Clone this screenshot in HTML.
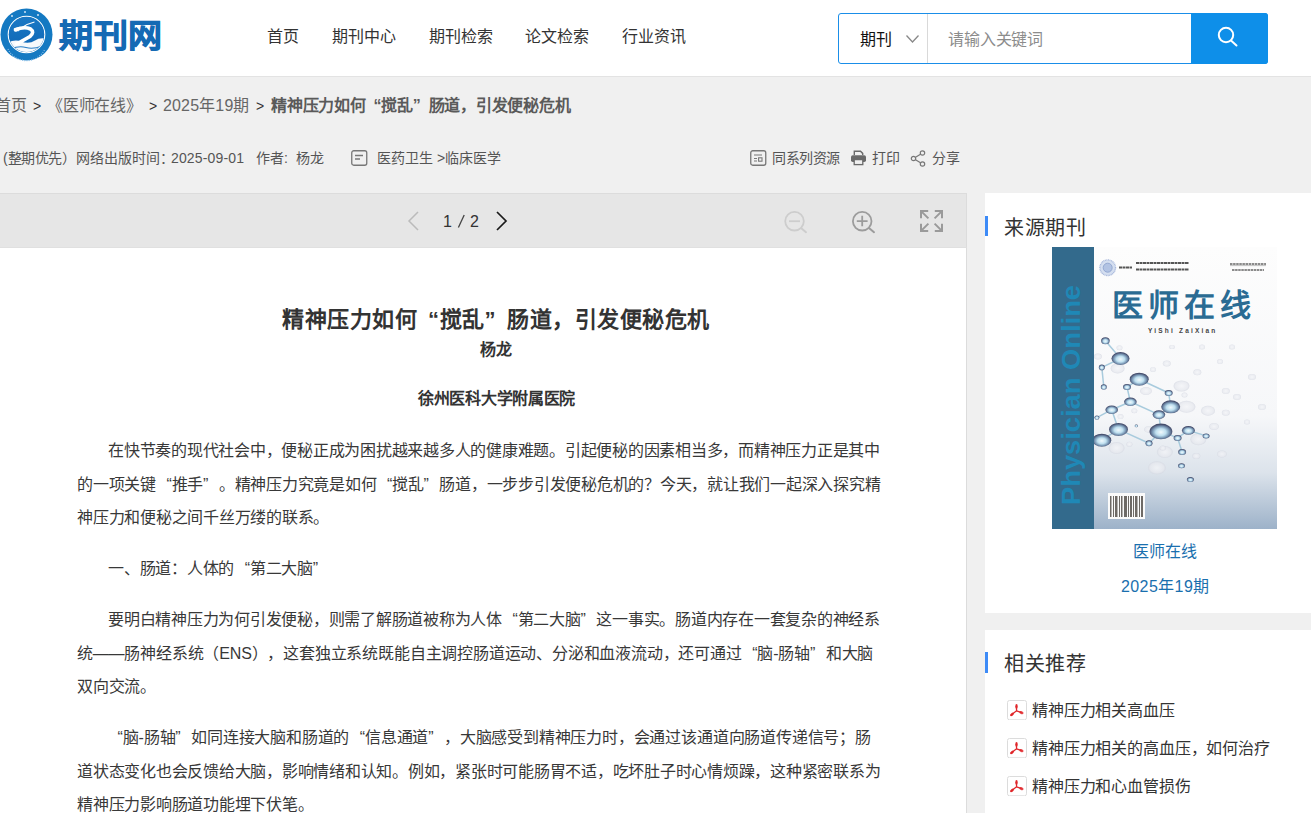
<!DOCTYPE html>
<html lang="zh-CN"><head><meta charset="utf-8">
<style>
*{margin:0;padding:0;box-sizing:border-box}
html,body{text-spacing-trim:space-all;width:1311px;height:813px;overflow:hidden;background:#f0f0f0;font-family:"Liberation Sans",sans-serif;color:#333}
.a{position:absolute;white-space:nowrap}
#hdr{position:absolute;left:0;top:0;width:1311px;height:77px;background:#fff;border-bottom:1px solid #e3e3e3}
.nav{font-size:16px;color:#333;line-height:20px;top:27px}
#search{position:absolute;left:838px;top:13px;width:430px;height:51px;border:1px solid #1a8ee8;border-radius:3px;background:#fff}
#sbtn{position:absolute;left:1191px;top:13px;width:77px;height:51px;background:#0e8fe9;border-radius:0 3px 3px 0}
#toolbar{position:absolute;left:0;top:193px;width:967px;height:55px;background:#e6e6e6;border-top:1px solid #dcdcdc;border-bottom:1px solid #e0e0e0;border-right:1px solid #dcdcdc}
#doc{position:absolute;left:0;top:248px;width:967px;height:600px;background:#fff;border-right:1px solid #dcdcdc}
.card{position:absolute;left:985px;width:340px;background:#fff}
.bar{position:absolute;left:0;width:3px;background:#3d8bf7}
.bc{font-size:16px;line-height:20px;color:#666;top:96px;letter-spacing:-0.25px}
.bcg{font-size:14px;line-height:20px;color:#333;top:96px}
.meta{font-size:14px;line-height:18px;color:#555;top:149px}
.pg{font-size:16px;line-height:20px;color:#333;top:212px}
.li{left:1032px;font-size:16px;line-height:20px;color:#333;letter-spacing:-0.15px}
.p{font-size:16px;letter-spacing:-0.25px;color:#383838;line-height:20px}
.lq{display:inline-block;width:15.75px;text-align:right}
.rq{display:inline-block;width:15.75px;text-align:left}
</style></head>
<body>
<div id="hdr"></div>
<!-- logo -->
<svg class="a" style="left:0;top:5px" width="56" height="60" viewBox="0 0 56 60">
  <defs><clipPath id="ic"><circle cx="26.5" cy="29.5" r="17.6"/></clipPath>
  <linearGradient id="ib" x1="0" y1="0" x2="0" y2="1"><stop offset="0" stop-color="#1f7fcb"/><stop offset="1" stop-color="#0a5fae"/></linearGradient></defs>
  <circle cx="26.5" cy="29.5" r="26" fill="#1479c2"/>
  <circle cx="26.5" cy="29.5" r="18.3" fill="none" stroke="#fff" stroke-width="1.1"/>
  <g clip-path="url(#ic)">
    <rect x="0" y="0" width="56" height="60" fill="url(#ib)"/>
    <path d="M6 38.5 Q14 34 21 36.5 Q29 39.5 35 35.5 Q39 32.5 46 33.5 L46 52 L6 52Z" fill="#f6f9fc"/>
    <path d="M11 44 Q19 40.5 26 42.5 Q33 44.5 42 41" fill="none" stroke="#2a7fc6" stroke-width="1.1"/>
    <path d="M15.5 25 Q24 21 30.5 24 Q35 27 30 31.5 Q23 35.5 16.5 39" fill="none" stroke="#fff" stroke-width="3.6" stroke-linecap="round"/>
    <path d="M13.5 23.2 L19 22 L18.5 26.5 Z" fill="#fff"/>
    <path d="M22 22.5 Q28 18.5 34.5 17" fill="none" stroke="#fff" stroke-width="1.1"/>
  </g>
  <path d="M8 44 A20.5 20.5 0 0 0 45 44" fill="none" stroke="#8fc2ea" stroke-width="1.2" stroke-dasharray="1 1.3"/>
  <g fill="#cfe4f5"><circle cx="12" cy="11" r="1"/><circle cx="25" cy="7" r="1"/><circle cx="38" cy="10" r="1"/></g>
</svg>
<div class="a" style="left:59px;top:16px;font-size:34px;font-weight:bold;color:#156ab4;line-height:40px;letter-spacing:0.5px;-webkit-text-stroke:0.9px #156ab4;transform:scaleY(0.92);transform-origin:0 50%">期刊网</div>

<div class="a nav" style="left:267px">首页</div>
<div class="a nav" style="left:332px">期刊中心</div>
<div class="a nav" style="left:429px">期刊检索</div>
<div class="a nav" style="left:525px">论文检索</div>
<div class="a nav" style="left:622px">行业资讯</div>

<div id="search"></div>
<div style="position:absolute;left:927px;top:14px;width:1px;height:49px;background:#d9d9d9"></div>
<div class="a" style="left:860px;top:30px;font-size:16px;color:#111;line-height:20px">期刊</div>
<svg class="a" style="left:905px;top:34px" width="16" height="10" viewBox="0 0 16 10"><path d="M1.5 1.5 L7.5 8 L13.5 1.5" fill="none" stroke="#888" stroke-width="1.3"/></svg>
<div class="a" style="left:948px;top:30px;font-size:16px;color:#8c8c8c;line-height:20px;letter-spacing:-0.15px">请输入关键词</div>
<div id="sbtn"></div>
<svg class="a" style="left:1214px;top:24px" width="26" height="26" viewBox="0 0 26 26"><circle cx="12" cy="11" r="7.2" fill="none" stroke="#fff" stroke-width="2"/><path d="M17 16.5 L22.5 21.5" stroke="#fff" stroke-width="2" stroke-linecap="round"/></svg>

<!-- breadcrumb -->
<div class="a bc" style="left:-5px">首页</div>
<div class="a bcg" style="left:33px">&gt;</div>
<div class="a bc" style="left:47px">《医师在线》</div>
<div class="a bcg" style="left:149px">&gt;</div>
<div class="a bc" style="left:163px;letter-spacing:0.15px">2025年19期</div>
<div class="a bcg" style="left:256px">&gt;</div>
<div class="a bc" style="left:271px;font-weight:bold;color:#5a5a5a">精神压力如何<span class="lq">“</span>搅乱<span class="rq">”</span>肠道，引发便秘危机</div>

<!-- meta -->
<div class="a meta" style="left:3px">(<span style="letter-spacing:-0.4px">整期优先）</span>网络出版时间：</div><div class="a meta" style="left:171px;letter-spacing:0.15px">2025-09-01</div>
<div class="a meta" style="left:256px">作者:&nbsp;&nbsp;杨龙</div>
<svg class="a" style="left:351px;top:150px" width="17" height="16" viewBox="0 0 17 16"><rect x="0.75" y="0.75" width="15" height="14.5" rx="2" fill="none" stroke="#777" stroke-width="1.3"/><path d="M4 5.5 H12 M4 9 H9" stroke="#777" stroke-width="1.3"/></svg>
<div class="a" style="left:377px;top:149px;font-size:14px;line-height:18px;color:#555">医药卫生 &gt;临床医学</div>

<svg class="a" style="left:750px;top:150px" width="17" height="16" viewBox="0 0 17 16"><rect x="0.75" y="0.75" width="15" height="14.5" rx="2" fill="none" stroke="#777" stroke-width="1.3"/><path d="M4 5 H12 M4 8.5 H7 M4 11 H7" stroke="#777" stroke-width="1.2"/><rect x="8.6" y="7.8" width="3.4" height="3.4" fill="none" stroke="#777" stroke-width="1.1"/></svg>
<div class="a" style="left:772px;top:149px;font-size:14px;line-height:18px;color:#555;letter-spacing:-0.5px">同系列资源</div>
<svg class="a" style="left:850px;top:150px" width="17" height="16" viewBox="0 0 17 16"><path d="M4.3 5 V1.2 H10.5 L12.7 3.4 V5" fill="none" stroke="#6a6a6a" stroke-width="1.4"/><rect x="1" y="5.2" width="15" height="6.8" rx="1.8" fill="#6a6a6a"/><rect x="4.2" y="9.6" width="8.6" height="5" fill="#f0f0f0" stroke="#6a6a6a" stroke-width="1.3"/></svg>
<div class="a" style="left:872px;top:149px;font-size:14px;line-height:18px;color:#555">打印</div>
<svg class="a" style="left:910px;top:150px" width="17" height="17" viewBox="0 0 17 17"><circle cx="12.5" cy="3" r="2.2" fill="none" stroke="#777" stroke-width="1.2"/><circle cx="3.5" cy="8.5" r="2.2" fill="none" stroke="#777" stroke-width="1.2"/><circle cx="12.5" cy="14" r="2.2" fill="none" stroke="#777" stroke-width="1.2"/><path d="M5.5 7.3 L10.5 4.2 M5.5 9.7 L10.5 12.8" stroke="#777" stroke-width="1.2"/></svg>
<div class="a" style="left:932px;top:149px;font-size:14px;line-height:18px;color:#555">分享</div>

<!-- toolbar -->
<div id="toolbar"></div>
<svg class="a" style="left:405px;top:210px" width="16" height="22" viewBox="0 0 16 22"><path d="M13 2 L4 11 L13 20" fill="none" stroke="#bbb" stroke-width="1.5"/></svg>
<div class="a pg" style="left:443px">1</div><svg class="a" style="left:456px;top:213px" width="10" height="16" viewBox="0 0 10 16"><path d="M2.4 14.6 L8.2 2" stroke="#444" stroke-width="1.3"/></svg><div class="a pg" style="left:470px">2</div>
<svg class="a" style="left:493px;top:210px" width="16" height="22" viewBox="0 0 16 22"><path d="M4 2 L13 11 L4 20" fill="none" stroke="#1a1a1a" stroke-width="1.7"/></svg>
<svg class="a" style="left:782px;top:209px" width="26" height="26" viewBox="0 0 26 26"><circle cx="12.5" cy="12.2" r="9.3" fill="none" stroke="#cdcdcd" stroke-width="1.8"/><path d="M7 12.2 H18" stroke="#cdcdcd" stroke-width="1.8"/><path d="M19.3 19.3 L24 23.2" stroke="#cdcdcd" stroke-width="2" stroke-linecap="round"/></svg>
<svg class="a" style="left:850px;top:209px" width="26" height="26" viewBox="0 0 26 26"><circle cx="12.2" cy="12.2" r="9.3" fill="none" stroke="#9c9c9c" stroke-width="1.8"/><path d="M6.8 12.2 H17.6 M12.2 6.8 V17.2" stroke="#9c9c9c" stroke-width="1.8"/><path d="M19.3 19.3 L24 23.2" stroke="#9c9c9c" stroke-width="2" stroke-linecap="round"/></svg>
<svg class="a" style="left:919px;top:209px" width="25" height="24" viewBox="0 0 25 24"><g stroke="#9a9a9a" stroke-width="2" fill="none"><path d="M2 9.2 V2 H9.2 M2.6 2.6 L9.4 9.4"/><path d="M23 9.2 V2 H15.8 M22.4 2.6 L15.6 9.4"/><path d="M2 14.8 V22 H9.2 M2.6 21.4 L9.4 14.6"/><path d="M23 14.8 V22 H15.8 M22.4 21.4 L15.6 14.6"/></g></svg>

<!-- document -->
<div id="doc"></div>
<div class="a" style="left:282px;top:307px;font-size:22px;line-height:26px;font-weight:bold;color:#333;letter-spacing:0.5px">精神压力如何<span class="lq" style="width:22.5px">“</span>搅乱<span class="rq" style="width:22.5px">”</span>肠道，引发便秘危机</div>
<div class="a" style="left:480px;top:340px;font-size:16px;line-height:20px;font-weight:bold;color:#333">杨龙</div>
<div class="a" style="left:418px;top:389px;font-size:16px;line-height:20px;font-weight:bold;color:#333;letter-spacing:-0.3px">徐州医科大学附属医院</div>

<div class="a p" style="left:108px;top:441px">在快节奏的现代社会中，便秘正成为困扰越来越多人的健康难题。引起便秘的因素相当多，而精神压力正是其中</div>
<div class="a p" style="left:77px;top:475px">的一项关键<span class="lq">“</span>推手<span class="rq">”</span>。精神压力究竟是如何<span class="lq">“</span>搅乱<span class="rq">”</span>肠道，一步步引发便秘危机的？今天，就让我们一起深入探究精</div>
<div class="a p" style="left:77px;top:508px">神压力和便秘之间千丝万缕的联系。</div>
<div class="a p" style="left:108px;top:559px">一、肠道：人体的<span class="lq">“</span>第二大脑<span class="rq">”</span></div>
<div class="a p" style="left:108px;top:610px">要明白精神压力为何引发便秘，则需了解肠道被称为人体<span class="lq">“</span>第二大脑<span class="rq">”</span>这一事实。肠道内存在一套复杂的神经系</div>
<div class="a p" style="left:77px;top:644px;letter-spacing:-0.19px">统——肠神经系统（ENS），这套独立系统既能自主调控肠道运动、分泌和血液流动，还可通过<span class="lq">“</span>脑-肠轴<span class="rq">”</span>和大脑</div>
<div class="a p" style="left:77px;top:677px">双向交流。</div>
<div class="a p" style="left:107px;top:728px;letter-spacing:-0.19px"><span class="lq">“</span>脑-肠轴<span class="rq">”</span>如同连接大脑和肠道的<span class="lq">“</span>信息通道<span class="rq">”</span>，大脑感受到精神压力时，会通过该通道向肠道传递信号；肠</div>
<div class="a p" style="left:77px;top:762px">道状态变化也会反馈给大脑，影响情绪和认知。例如，紧张时可能肠胃不适，吃坏肚子时心情烦躁，这种紧密联系为</div>
<div class="a p" style="left:77px;top:795px">精神压力影响肠道功能埋下伏笔。</div>

<!-- sidebar card 1 -->
<div class="card" style="top:193px;height:420px">
  <div class="bar" style="top:23px;height:20px"></div>
</div>
<div class="a" style="left:1004px;top:216px;font-size:20px;line-height:24px;color:#333;letter-spacing:0.6px">来源期刊</div>
<svg class="a" style="left:1052px;top:247px" width="225" height="282" viewBox="0 0 225 282">
<defs><linearGradient id="cbg" x1="0" y1="0" x2="0" y2="1"><stop offset="0" stop-color="#fdfdfd"/><stop offset="0.6" stop-color="#f6f7f9"/><stop offset="0.8" stop-color="#dce3eb"/><stop offset="1" stop-color="#9db2c9"/></linearGradient>
<radialGradient id="bd" cx="50%" cy="55%" r="50%"><stop offset="0" stop-color="#f2f9fd"/><stop offset="0.45" stop-color="#bfe0f0"/><stop offset="0.75" stop-color="#7896b4"/><stop offset="1" stop-color="#454d6c"/></radialGradient>
<radialGradient id="bf" cx="50%" cy="50%" r="55%"><stop offset="0" stop-color="#f4f5f8"/><stop offset="0.7" stop-color="#e6e8ee"/><stop offset="1" stop-color="#cdd1dc"/></radialGradient></defs>
<rect width="225" height="282" fill="url(#cbg)"/>
<ellipse cx="65.6" cy="121.4" rx="7.0" ry="5.0" fill="url(#bf)" opacity=".75"/>
<ellipse cx="45.9" cy="109.6" rx="4.0" ry="3.0" fill="url(#bf)" opacity=".75"/>
<ellipse cx="67.5" cy="100.7" rx="3.0" ry="2.5" fill="url(#bf)" opacity=".75"/>
<ellipse cx="101.0" cy="122.4" rx="3.0" ry="2.5" fill="url(#bf)" opacity=".75"/>
<ellipse cx="114.8" cy="116.5" rx="4.0" ry="3.0" fill="url(#bf)" opacity=".75"/>
<ellipse cx="129.5" cy="139.0" rx="8.0" ry="5.5" fill="url(#bf)" opacity=".75"/>
<ellipse cx="145.3" cy="125.3" rx="4.0" ry="3.0" fill="url(#bf)" opacity=".75"/>
<ellipse cx="94.0" cy="144.0" rx="6.0" ry="4.0" fill="url(#bf)" opacity=".75"/>
<ellipse cx="134.5" cy="159.8" rx="9.0" ry="6.0" fill="url(#bf)" opacity=".75"/>
<ellipse cx="132.5" cy="148.0" rx="3.0" ry="2.5" fill="url(#bf)" opacity=".75"/>
<ellipse cx="156.0" cy="163.7" rx="7.0" ry="5.0" fill="url(#bf)" opacity=".75"/>
<ellipse cx="97.0" cy="182.4" rx="5.0" ry="3.5" fill="url(#bf)" opacity=".75"/>
<ellipse cx="64.6" cy="201.0" rx="8.0" ry="6.0" fill="url(#bf)" opacity=".75"/>
<ellipse cx="112.8" cy="205.0" rx="8.0" ry="6.0" fill="url(#bf)" opacity=".75"/>
<ellipse cx="146.3" cy="192.3" rx="8.0" ry="6.0" fill="url(#bf)" opacity=".75"/>
<ellipse cx="104.9" cy="220.8" rx="9.0" ry="6.5" fill="url(#bf)" opacity=".75"/>
<ellipse cx="162.0" cy="179.5" rx="5.0" ry="3.5" fill="url(#bf)" opacity=".75"/>
<ellipse cx="173.8" cy="165.7" rx="4.0" ry="3.0" fill="url(#bf)" opacity=".75"/>
<ellipse cx="169.9" cy="207.0" rx="5.0" ry="3.5" fill="url(#bf)" opacity=".75"/>
<ellipse cx="173.8" cy="144.0" rx="4.0" ry="3.0" fill="url(#bf)" opacity=".75"/>
<ellipse cx="168.0" cy="114.5" rx="3.0" ry="2.5" fill="url(#bf)" opacity=".75"/>
<ellipse cx="144.3" cy="209.0" rx="4.0" ry="3.0" fill="url(#bf)" opacity=".75"/>
<ellipse cx="77.4" cy="197.2" rx="3.0" ry="2.5" fill="url(#bf)" opacity=".75"/>
<ellipse cx="68.5" cy="169.6" rx="3.0" ry="2.5" fill="url(#bf)" opacity=".75"/>
<ellipse cx="82.3" cy="163.7" rx="3.0" ry="2.5" fill="url(#bf)" opacity=".75"/>
<ellipse cx="110.8" cy="201.0" rx="3.0" ry="2.5" fill="url(#bf)" opacity=".75"/>
<ellipse cx="185.0" cy="150.0" rx="4.0" ry="3.0" fill="url(#bf)" opacity=".75"/>
<ellipse cx="200.0" cy="130.0" rx="4.0" ry="3.0" fill="url(#bf)" opacity=".75"/>
<ellipse cx="195.0" cy="175.0" rx="3.0" ry="2.5" fill="url(#bf)" opacity=".75"/>
<ellipse cx="210.0" cy="160.0" rx="4.0" ry="3.0" fill="url(#bf)" opacity=".75"/>
<ellipse cx="150.0" cy="100.0" rx="3.0" ry="2.5" fill="url(#bf)" opacity=".75"/>
<ellipse cx="120.0" cy="100.0" rx="3.0" ry="2.0" fill="url(#bf)" opacity=".75"/>
<ellipse cx="180.0" cy="100.0" rx="3.0" ry="2.5" fill="url(#bf)" opacity=".75"/>
<line x1="53.4" y1="93.8" x2="68.5" y2="111.5" stroke="#a8cbdd" stroke-width="1.5"/>
<line x1="68.5" y1="111.5" x2="49.8" y2="120.4" stroke="#a8cbdd" stroke-width="1.5"/>
<line x1="49.8" y1="120.4" x2="51.8" y2="140.0" stroke="#a8cbdd" stroke-width="1.5"/>
<line x1="87.2" y1="132.2" x2="75.0" y2="140.0" stroke="#a8cbdd" stroke-width="1.5"/>
<line x1="87.2" y1="132.2" x2="116.7" y2="146.0" stroke="#a8cbdd" stroke-width="1.5"/>
<line x1="75.0" y1="140.0" x2="78.4" y2="154.8" stroke="#a8cbdd" stroke-width="1.5"/>
<line x1="78.4" y1="154.8" x2="59.7" y2="162.7" stroke="#a8cbdd" stroke-width="1.5"/>
<line x1="78.4" y1="154.8" x2="106.9" y2="167.6" stroke="#a8cbdd" stroke-width="1.5"/>
<line x1="59.7" y1="162.7" x2="66.5" y2="182.4" stroke="#a8cbdd" stroke-width="1.5"/>
<line x1="59.7" y1="162.7" x2="44.9" y2="170.6" stroke="#a8cbdd" stroke-width="1.5"/>
<line x1="116.7" y1="146.0" x2="118.7" y2="159.8" stroke="#a8cbdd" stroke-width="1.5"/>
<line x1="118.7" y1="159.8" x2="106.9" y2="167.6" stroke="#a8cbdd" stroke-width="1.5"/>
<line x1="106.9" y1="167.6" x2="108.9" y2="184.4" stroke="#a8cbdd" stroke-width="1.5"/>
<line x1="66.5" y1="182.4" x2="97.0" y2="196.2" stroke="#a8cbdd" stroke-width="1.5"/>
<line x1="97.0" y1="196.2" x2="108.9" y2="184.4" stroke="#a8cbdd" stroke-width="1.5"/>
<line x1="66.5" y1="182.4" x2="49.8" y2="193.2" stroke="#a8cbdd" stroke-width="1.5"/>
<line x1="108.9" y1="184.4" x2="125.6" y2="190.9" stroke="#a8cbdd" stroke-width="1.5"/>
<line x1="125.6" y1="190.9" x2="136.4" y2="183.4" stroke="#a8cbdd" stroke-width="1.5"/>
<line x1="136.4" y1="183.4" x2="154.1" y2="188.9" stroke="#a8cbdd" stroke-width="1.5"/>
<line x1="125.6" y1="190.9" x2="130.1" y2="205.0" stroke="#a8cbdd" stroke-width="1.5"/>
<ellipse cx="53.4" cy="93.8" rx="4.3" ry="3.5" fill="url(#bd)"/>
<ellipse cx="68.5" cy="111.5" rx="9.0" ry="6.5" fill="url(#bd)"/>
<ellipse cx="49.8" cy="120.4" rx="3.0" ry="2.8" fill="url(#bd)"/>
<ellipse cx="51.8" cy="140.0" rx="3.0" ry="2.8" fill="url(#bd)"/>
<ellipse cx="87.2" cy="132.2" rx="9.5" ry="6.5" fill="url(#bd)"/>
<ellipse cx="75.0" cy="140.0" rx="4.0" ry="3.0" fill="url(#bd)"/>
<ellipse cx="78.4" cy="154.8" rx="6.3" ry="4.3" fill="url(#bd)"/>
<ellipse cx="116.7" cy="146.0" rx="4.0" ry="3.0" fill="url(#bd)"/>
<ellipse cx="118.7" cy="159.8" rx="9.5" ry="6.5" fill="url(#bd)"/>
<ellipse cx="59.7" cy="162.7" rx="6.3" ry="4.3" fill="url(#bd)"/>
<ellipse cx="106.9" cy="167.6" rx="6.3" ry="4.3" fill="url(#bd)"/>
<ellipse cx="66.5" cy="182.4" rx="9.5" ry="6.5" fill="url(#bd)"/>
<ellipse cx="108.9" cy="184.4" rx="11.4" ry="7.8" fill="url(#bd)"/>
<ellipse cx="136.4" cy="183.4" rx="6.5" ry="4.3" fill="url(#bd)"/>
<ellipse cx="49.8" cy="193.2" rx="9.5" ry="6.5" fill="url(#bd)"/>
<ellipse cx="97.0" cy="196.2" rx="3.5" ry="3.0" fill="url(#bd)"/>
<ellipse cx="125.6" cy="190.9" rx="4.0" ry="3.0" fill="url(#bd)"/>
<ellipse cx="154.1" cy="188.9" rx="3.5" ry="2.5" fill="url(#bd)"/>
<ellipse cx="130.1" cy="205.0" rx="4.0" ry="3.0" fill="url(#bd)"/>
<ellipse cx="129.5" cy="218.8" rx="3.5" ry="2.5" fill="url(#bd)"/>
<ellipse cx="138.4" cy="232.6" rx="3.5" ry="2.5" fill="url(#bd)"/>
<ellipse cx="44.9" cy="170.6" rx="2.5" ry="2.2" fill="url(#bd)"/>
<ellipse cx="84.3" cy="178.9" rx="1.6" ry="1.4" fill="url(#bd)"/>
<rect x="0" y="0" width="42" height="282" fill="#336a8c"/>
<text transform="translate(28 258) rotate(-90)" font-family="Liberation Sans" font-weight="bold" font-size="26" fill="#1f88b6" textLength="220" lengthAdjust="spacingAndGlyphs">Physician Online</text>
<circle cx="55.7" cy="20.7" r="7.8" fill="#d5dff0" stroke="#a9b9dc" stroke-width="1.4" stroke-dasharray="1 .6"/><circle cx="55.7" cy="20.7" r="4.5" fill="#b2c3e3" stroke="#8aa0cc" stroke-width=".8"/>
<g stroke="#555" stroke-width="2.2" stroke-dasharray="3 0.5"><path d="M67 20.5 H80"/><path d="M84 16 H137 M84 22.5 H137"/></g><g stroke="#666" stroke-width="1.6" stroke-dasharray="2.5 0.6"><path d="M178 17 H214 M180 23 H212"/></g><path d="M178 18.6 H214" stroke="#999" stroke-width=".6"/>
<text x="132" y="69" text-anchor="middle" font-family="Liberation Serif, serif" font-weight="bold" font-size="31" fill="#2a6b93" letter-spacing="5">医师在线</text>
<text x="96" y="85.5" font-family="Liberation Sans" font-weight="bold" font-size="6.5" fill="#444" letter-spacing="2.2">YiShi  ZaiXian</text>
<rect x="56" y="246" width="37" height="26" fill="#fafafa"/>
<rect x="58" y="249" width="1.5" height="21" fill="#6e6a66"/>
<rect x="61" y="249" width="1" height="21" fill="#6e6a66"/>
<rect x="63" y="249" width="2.5" height="21" fill="#6e6a66"/>
<rect x="67" y="249" width="1" height="21" fill="#6e6a66"/>
<rect x="69" y="249" width="1.5" height="21" fill="#6e6a66"/>
<rect x="72" y="249" width="3" height="21" fill="#6e6a66"/>
<rect x="76" y="249" width="1" height="21" fill="#6e6a66"/>
<rect x="78" y="249" width="2" height="21" fill="#6e6a66"/>
<rect x="81" y="249" width="1" height="21" fill="#6e6a66"/>
<rect x="83" y="249" width="2.5" height="21" fill="#6e6a66"/>
<rect x="87" y="249" width="1" height="21" fill="#6e6a66"/>
<rect x="89" y="249" width="2" height="21" fill="#6e6a66"/>
</svg>
<div class="a" style="left:1133px;top:542px;font-size:16px;line-height:20px;color:#1a6fae">医师在线</div>
<div class="a" style="left:1121px;top:577px;font-size:16px;line-height:20px;color:#1a6fae;letter-spacing:0.4px">2025年19期</div>

<!-- sidebar card 2 -->
<div class="card" style="top:630px;height:200px">
  <div class="bar" style="top:22px;height:21px"></div>
</div>
<div class="a" style="left:1004px;top:652px;font-size:20px;line-height:24px;color:#333;letter-spacing:0.6px">相关推荐</div>
<svg class="a" style="left:1007px;top:700px" width="20" height="20" viewBox="0 0 20 20"><rect x="0.5" y="0.5" width="19" height="19.3" rx="2" fill="#fff" stroke="#dcdcdc"/><g fill="#e0262a" stroke="#e0262a"><path d="M9.4 6 L9.6 10.8 L4.5 14.8 M9.6 10.8 L14.6 12.6" fill="none" stroke-width="1.3"/><ellipse cx="9.5" cy="6.4" rx="1.2" ry="2.3" stroke="none"/><ellipse cx="5" cy="14.4" rx="2.3" ry="1.3" transform="rotate(-38 5 14.4)" stroke="none"/><ellipse cx="14.4" cy="12.6" rx="2.2" ry="1.4" transform="rotate(22 14.4 12.6)" stroke="none" opacity=".85"/></g></svg>
<div class="a li" style="top:701px">精神压力相关高血压</div>
<svg class="a" style="left:1007px;top:738px" width="20" height="20" viewBox="0 0 20 20"><rect x="0.5" y="0.5" width="19" height="19.3" rx="2" fill="#fff" stroke="#dcdcdc"/><g fill="#e0262a" stroke="#e0262a"><path d="M9.4 6 L9.6 10.8 L4.5 14.8 M9.6 10.8 L14.6 12.6" fill="none" stroke-width="1.3"/><ellipse cx="9.5" cy="6.4" rx="1.2" ry="2.3" stroke="none"/><ellipse cx="5" cy="14.4" rx="2.3" ry="1.3" transform="rotate(-38 5 14.4)" stroke="none"/><ellipse cx="14.4" cy="12.6" rx="2.2" ry="1.4" transform="rotate(22 14.4 12.6)" stroke="none" opacity=".85"/></g></svg>
<div class="a li" style="top:739px">精神压力相关的高血压，如何治疗</div>
<svg class="a" style="left:1007px;top:776px" width="20" height="20" viewBox="0 0 20 20"><rect x="0.5" y="0.5" width="19" height="19.3" rx="2" fill="#fff" stroke="#dcdcdc"/><g fill="#e0262a" stroke="#e0262a"><path d="M9.4 6 L9.6 10.8 L4.5 14.8 M9.6 10.8 L14.6 12.6" fill="none" stroke-width="1.3"/><ellipse cx="9.5" cy="6.4" rx="1.2" ry="2.3" stroke="none"/><ellipse cx="5" cy="14.4" rx="2.3" ry="1.3" transform="rotate(-38 5 14.4)" stroke="none"/><ellipse cx="14.4" cy="12.6" rx="2.2" ry="1.4" transform="rotate(22 14.4 12.6)" stroke="none" opacity=".85"/></g></svg>
<div class="a li" style="top:777px">精神压力和心血管损伤</div>
</body></html>
